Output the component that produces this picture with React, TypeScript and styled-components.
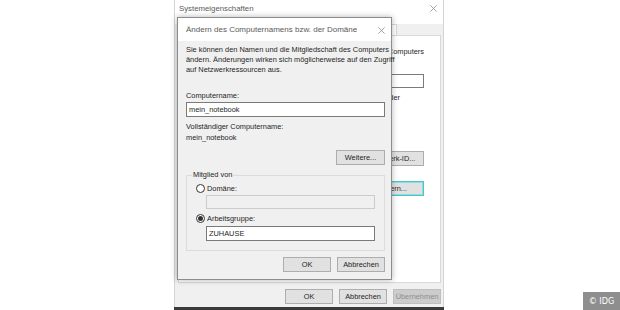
import styled, { createGlobalStyle } from 'styled-components';

const GlobalStyle = createGlobalStyle`
  html, body {
    margin: 0;
    padding: 0;
    background: #ffffff;
  }
  body {
    font-family: "Liberation Sans", Arial, sans-serif;
    color: #1e1e1e;
  }
`;

const Page = styled.div`
  position: relative;
  width: 620px;
  height: 310px;
  overflow: hidden;
  background: #ffffff;
`;

/* outer window: Systemeigenschaften */
const Window = styled.div`
  margin-left: 174px;
  width: 270px;
  height: 310px;
  box-sizing: border-box;
  display: flex;
  flex-direction: column;
  background: #f0f0f0;
  border-left: 1px solid #d4d4d4;
  border-right: 1px solid #d4d4d4;
`;

const TitleBar = styled.div<{ $height: number; $pad: number; $top?: number }>`
  height: ${p => p.$height}px;
  flex: none;
  display: flex;
  align-items: ${p => (p.$top ? 'flex-start' : 'center')};
  justify-content: space-between;
  background: #ffffff;
  padding: ${p => p.$top ?? 0}px 6px 0 ${p => p.$pad}px;
  box-sizing: border-box;
`;

const TitleText = styled.span<{ $size: number }>`
  font-size: ${p => p.$size}px;
  line-height: 10px;
  color: #5a5a5a;
  white-space: nowrap;
`;

const CloseIcon = ({ size = 7 }: { size?: number }) => (
  <svg width={size} height={size} viewBox="0 0 10 10" style={{ marginTop: 1 }}>
    <path d="M0.5 0.5 L9.5 9.5 M9.5 0.5 L0.5 9.5" stroke="#8a8a8a" strokeWidth="1.1" fill="none" />
  </svg>
);

const TabRow = styled.div`
  height: 11px;
  flex: none;
  display: flex;
  justify-content: flex-end;
  align-items: flex-end;
  padding-right: 46px;
`;

const Tab = styled.div`
  height: 11px;
  box-sizing: border-box;
  padding: 0 4px;
  border: 1px solid #d9d9d9;
  border-bottom: none;
  background: #ffffff;
  font-size: 7.4px;
  line-height: 10px;
  color: #333;
`;

const TabPanel = styled.div`
  height: 248px;
  flex: none;
  margin: 0 2px 0 3px;
  box-sizing: border-box;
  background: #ffffff;
  border: 1px solid #d9d9d9;
  padding: 11px 16px 0 10px;
  display: flex;
  flex-direction: column;
`;

const Line = styled.div<{ $gap?: number; $align?: string; $inset?: number }>`
  font-size: 7.4px;
  line-height: 10px;
  height: 10px;
  white-space: nowrap;
  margin-top: ${p => p.$gap ?? 0}px;
  padding-right: ${p => p.$inset ?? 0}px;
  text-align: ${p => p.$align ?? 'left'};
`;

const FieldRow = styled.div<{ $gap?: number }>`
  display: flex;
  align-items: center;
  justify-content: flex-end;
  margin-top: ${p => p.$gap ?? 0}px;
`;

const TextBox = styled.div<{ $width?: number; $height?: number; $disabled?: boolean; $gap?: number; $indent?: number }>`
  box-sizing: border-box;
  width: ${p => (p.$width ? `${p.$width}px` : 'auto')};
  height: ${p => p.$height ?? 15}px;
  margin-top: ${p => p.$gap ?? 0}px;
  margin-left: ${p => p.$indent ?? 0}px;
  background: ${p => (p.$disabled ? '#f0f0f0' : '#ffffff')};
  border: 1px solid ${p => (p.$disabled ? '#cccccc' : '#7a7a7a')};
  padding: 0 2px;
  font-size: 7.4px;
  line-height: ${p => (p.$height ?? 15) - 2}px;
  color: #1e1e1e;
  white-space: nowrap;
`;

const Button = styled.div<{ $width?: number; $focus?: boolean; $disabled?: boolean }>`
  box-sizing: border-box;
  width: ${p => p.$width ?? 48}px;
  height: 15px;
  flex: none;
  display: flex;
  align-items: center;
  justify-content: center;
  background: ${p => (p.$disabled ? '#cccccc' : '#e1e1e1')};
  border: 1px solid ${p => (p.$focus ? '#4fc3c9' : p.$disabled ? '#bfbfbf' : '#adadad')};
  box-shadow: ${p => (p.$focus ? 'inset 0 0 0 1px #8fdde0' : 'none')};
  font-size: 7.4px;
  color: ${p => (p.$disabled ? '#8d8d8d' : '#1e1e1e')};
  white-space: nowrap;
  overflow: hidden;
`;

const ButtonRow = styled.div<{ $top?: number; $right?: number }>`
  display: flex;
  justify-content: flex-end;
  gap: 6px;
  flex: none;
  padding-top: ${p => p.$top ?? 0}px;
  padding-right: ${p => p.$right ?? 0}px;
`;

const BottomEdge = styled.div`
  height: 3px;
  flex: none;
  margin-top: auto;
  background: #3a3a3a;
  margin-left: -1px;
  margin-right: -1px;
`;

/* inner dialog */
const Dialog = styled.div`
  position: absolute;
  left: 177px;
  top: 17px;
  width: 215px;
  box-sizing: border-box;
  background: #f0f0f0;
  border: 1px solid #8c8c8c;
  box-shadow: 0 0 6px rgba(0, 0, 0, 0.3);
  display: flex;
  flex-direction: column;
  padding-bottom: 7px;
`;

const DialogBody = styled.div`
  padding: 4px 6px 0 8px;
  display: flex;
  flex-direction: column;
`;

const GroupBox = styled.fieldset`
  margin: 5px 0 0 0;
  padding: 0 9px 9px 4px;
  border: 1px solid #dcdcdc;
  display: flex;
  flex-direction: column;
  min-width: 0;
`;

const Legend = styled.legend`
  padding: 0 1px;
  font-size: 7.4px;
  line-height: 10px;
  height: 10px;
  margin-left: 1px;
`;

const RadioRow = styled.label<{ $gap: number }>`
  display: flex;
  align-items: center;
  gap: 2px;
  height: 10px;
  margin-top: ${p => p.$gap}px;
  margin-left: 5px;
  font-size: 7.4px;
`;

const RadioCircle = styled.span<{ $checked?: boolean }>`
  width: 9px;
  height: 9px;
  box-sizing: border-box;
  border-radius: 50%;
  border: 1px solid #333333;
  background: #ffffff;
  display: flex;
  align-items: center;
  justify-content: center;
  &::after {
    content: '';
    width: 5px;
    height: 5px;
    border-radius: 50%;
    background: ${p => (p.$checked ? '#333333' : 'transparent')};
  }
`;

const Badge = styled.div`
  position: absolute;
  right: 0;
  bottom: 0;
  width: 37px;
  height: 18px;
  background: #8e8e8e;
  color: #ffffff;
  font-family: "DejaVu Sans Condensed", "DejaVu Sans", sans-serif;
  font-size: 9px;
  display: flex;
  align-items: center;
  justify-content: center;
`;

const App = () => {
  return (
    <Page>
      <GlobalStyle />
      <Window>
        <TitleBar $height={24} $pad={4} $top={4}>
          <TitleText $size={7.8}>Systemeigenschaften</TitleText>
          <CloseIcon />
        </TitleBar>
        <TabRow>
          <Tab>Remote</Tab>
        </TabRow>
        <TabPanel>
          <Line $align="right">Computers</Line>
          <FieldRow $gap={17}>
            <TextBox $width={120} $height={14} />
          </FieldRow>
          <Line $gap={5} $align="right" $inset={24}>Beispiel: „Küche“ oder</Line>
          <FieldRow $gap={48}>
            <Button $width={64}>Netzwerk-ID...</Button>
          </FieldRow>
          <FieldRow $gap={15}>
            <Button $width={64} $focus>Ändern...</Button>
          </FieldRow>
        </TabPanel>
        <ButtonRow $top={6} $right={2}>
          <Button>OK</Button>
          <Button>Abbrechen</Button>
          <Button $disabled>Übernehmen</Button>
        </ButtonRow>
        <BottomEdge />
      </Window>

      <Dialog>
        <TitleBar $height={23} $pad={8}>
          <TitleText $size={8}>Ändern des Computernamens bzw. der Domäne</TitleText>
          <CloseIcon />
        </TitleBar>
        <DialogBody>
          <Line>Sie können den Namen und die Mitgliedschaft des Computers</Line>
          <Line>ändern. Änderungen wirken sich möglicherweise auf den Zugriff</Line>
          <Line>auf Netzwerkressourcen aus.</Line>
          <Line $gap={16}>Computername:</Line>
          <TextBox $gap={1}>mein_notebook</TextBox>
          <Line $gap={5}>Vollständiger Computername:</Line>
          <Line $gap={1}>mein_notebook</Line>
          <ButtonRow $top={7}>
            <Button $width={49}>Weitere...</Button>
          </ButtonRow>
          <GroupBox>
            <Legend>Mitglied von</Legend>
            <RadioRow $gap={3}>
              <RadioCircle />
              Domäne:
            </RadioRow>
            <TextBox $disabled $height={14} $gap={2} $indent={15} />
            <RadioRow $gap={4}>
              <RadioCircle $checked />
              Arbeitsgruppe:
            </RadioRow>
            <TextBox $gap={3} $indent={15}>ZUHAUSE</TextBox>
          </GroupBox>
          <ButtonRow $top={6}>
            <Button>OK</Button>
            <Button>Abbrechen</Button>
          </ButtonRow>
        </DialogBody>
      </Dialog>

      <Badge>© IDG</Badge>
    </Page>
  );
};

export default App;
